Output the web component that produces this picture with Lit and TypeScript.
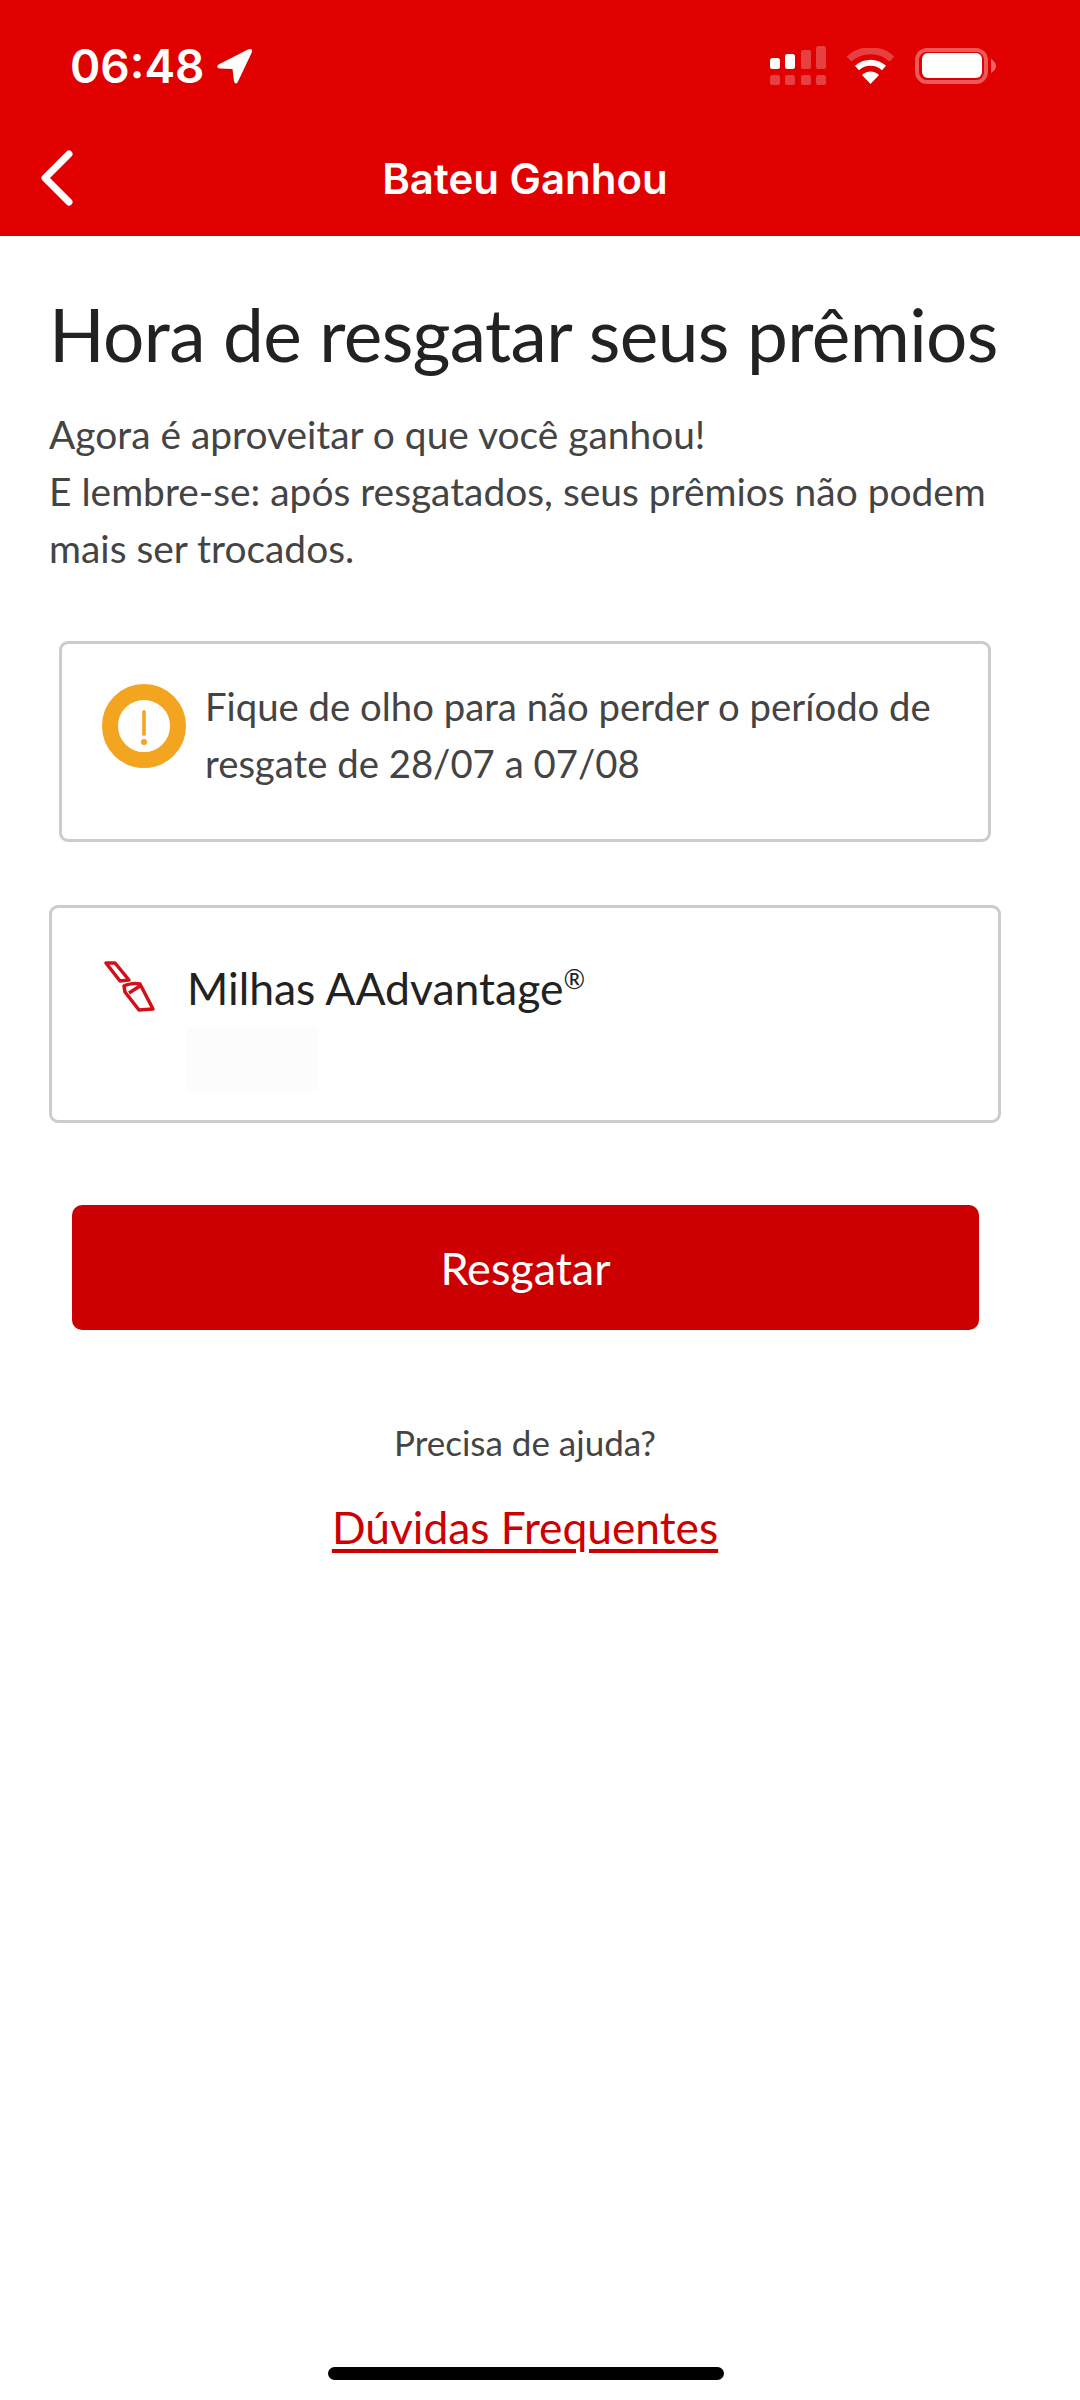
import { LitElement, html, css } from "lit";
import { customElement } from "lit/decorators.js";

@customElement("app-root")
export class AppRoot extends LitElement {
  static styles = css`
    :host { display: block; width: 1080px; height: 2400px; background: #fff; position: relative; overflow: hidden; font-family: Lato, "Noto Sans", sans-serif; color: #444; }
    .head { background: #e00000; height: 236px; color: #fff; display: flex; flex-direction: column; }
    .status { height: 132px; flex: none; display: flex; justify-content: space-between; align-items: center; padding: 0 84px 0 70px; box-sizing: border-box; }
    .time { font-family: Inter, sans-serif; font-weight: 600; font-size: 46px; display: flex; align-items: center; gap: 12px; }
    .sicons { display: flex; align-items: center; gap: 20px; }
    .nav { display: grid; grid-template-columns: 1fr auto 1fr; align-items: center; padding: 0 70px 0 40px; height: 80px; margin-top: 6px; }
    .nav .t { font-family: Inter, sans-serif; font-weight: 600; font-size: 42px; white-space: nowrap; }
    .main { padding: 0 79px 0 49px; }
    h1 { font-weight: 400; font-size: 73px; letter-spacing: -0.6px; line-height: 90px; margin: 0; padding-top: 53px; color: #222; white-space: nowrap; }
    .intro { font-size: 38.9px; line-height: 57px; margin: 27px 0 0; color: #444; }
    .note { margin: 64px 10px 0 10px; height: 201px; border: 3px solid #ccc; border-radius: 9px; box-sizing: border-box; display: flex; gap: 19px; padding: 40px 40px; font-size: 38.3px; line-height: 57px; color: #444; }
    .note .txt { margin-top: -6px; }
    .warn { flex: none; width: 84px; height: 84px; }
    .card { margin: 63px 0 0 0; height: 218px; border: 3px solid #ccc; border-radius: 9px; box-sizing: border-box; padding: 50px 50px; display: flex; gap: 29px; }
    .logo { flex: none; margin-top: 2px; }
    .name { font-size: 44.5px; line-height: 60px; color: #222; }
    .name sup { font-size: 26px; line-height: 0; }
    .blank { width: 131px; height: 64px; background: #fcfcfc; margin-top: 9px; }
    .btn { margin: 82px 22px 0 23px; height: 125px; background: #cc0000; border-radius: 10px; color: #fff; display: flex; align-items: center; justify-content: center; font-size: 45px; }
    .help { text-align: center; font-size: 35px; margin-top: 87px; line-height: 50px; color: #444; }
    .link { text-align: center; font-size: 44.3px; margin-top: 30px; color: #cc0000; text-decoration: underline; line-height: 60px; text-underline-offset: 5px; }
    .home { position: absolute; left: 328px; top: 2367px; width: 396px; height: 13px; border-radius: 7px; background: #000; }
  `;

  render() {
    return html`
      <div class="head">
        <div class="status">
          <div class="time">06:48
            <svg width="36" height="36" viewBox="0 0 36 36"><path d="M31 1.5 C34.5 0 36 1.5 34.5 5 L21 33.5 C19.5 36.5 17.5 36 17 33 L15.5 21 L3 20.5 C-0.5 20 -0.5 17.5 2.5 16 Z" fill="#fff"/></svg>
          </div>
          <div class="sicons">
            <svg width="56" height="40" viewBox="0 0 56 40">
              <g fill="#fff">
                <rect x="0" y="12" width="10" height="11" rx="2.5"/>
                <rect x="15" y="8" width="10" height="15" rx="2.5"/>
                <g opacity=".25">
                  <rect x="31" y="4" width="10" height="19" rx="2.5"/>
                  <rect x="46" y="0" width="10" height="23" rx="2.5"/>
                  <rect x="0" y="29" width="10" height="10" rx="2.5"/>
                  <rect x="15" y="29" width="10" height="10" rx="2.5"/>
                  <rect x="31" y="29" width="10" height="10" rx="2.5"/>
                  <rect x="46" y="29" width="10" height="10" rx="2.5"/>
                </g>
              </g>
            </svg>
            <svg width="49" height="36" viewBox="0 0 49 36">
              <path d="M3 11 A32 32 0 0 1 46 11" fill="none" stroke="#fff" stroke-opacity=".25" stroke-width="7"/>
              <path d="M11 20 A20 20 0 0 1 38 20" fill="none" stroke="#fff" stroke-width="6"/>
              <path d="M24.5 36 L16 27 A12 12 0 0 1 33 27 Z" fill="#fff"/>
            </svg>
            <svg width="81" height="36" viewBox="0 0 81 36">
              <rect x="2" y="2" width="69" height="32" rx="10" fill="none" stroke="#fff" stroke-opacity=".35" stroke-width="4"/>
              <rect x="7" y="5" width="60" height="25" rx="6" fill="#fff"/>
              <path d="M76 11 C79 13 81 15 81 18 C81 21 79 23 76 25 Z" fill="#fff" fill-opacity=".4"/>
            </svg>
          </div>
        </div>
        <div class="nav">
          <svg width="34" height="56" viewBox="0 0 34 56"><path d="M29 4 L5 28 L29 52" fill="none" stroke="#fff" stroke-width="7" stroke-linecap="round" stroke-linejoin="round"/></svg>
          <div class="t">Bateu Ganhou</div>
          <div></div>
        </div>
      </div>
      <div class="main">
        <h1>Hora de resgatar seus prêmios</h1>
        <p class="intro">Agora é aproveitar o que você ganhou!<br>E lembre-se: após resgatados, seus prêmios não podem mais ser trocados.</p>
        <div class="note">
          <svg class="warn" viewBox="0 0 84 84">
            <circle cx="42" cy="42" r="34" fill="#fff" stroke="#f4a520" stroke-width="16"/>
            <rect x="40.2" y="26" width="3.6" height="26" rx="1.8" fill="#f4a520"/>
            <circle cx="42" cy="58" r="3" fill="#f4a520"/>
          </svg>
          <div class="txt">Fique de olho para não perder o período de resgate de 28/07 a 07/08</div>
        </div>
        <div class="card">
          <svg class="logo" width="56" height="56" viewBox="0 0 56 56">
            <g fill="none" stroke="#d0101a" stroke-width="3.5" stroke-linejoin="round">
              <path d="M4 3 L13 3 L27 20 L18 21 Z"/>
              <path d="M22 26 C25 24 32 23 38 24 L51 49 L37 50 L23 32 Z"/>
              <path d="M27 33 L38 26"/>
            </g>
          </svg>
          <div>
            <div class="name">Milhas AAdvantage<sup>®</sup></div>
            <div class="blank"></div>
          </div>
        </div>
        <div class="btn">Resgatar</div>
        <div class="help">Precisa de ajuda?</div>
        <div class="link">Dúvidas Frequentes</div>
      </div>
      <div class="home"></div>
    `;
  }
}
